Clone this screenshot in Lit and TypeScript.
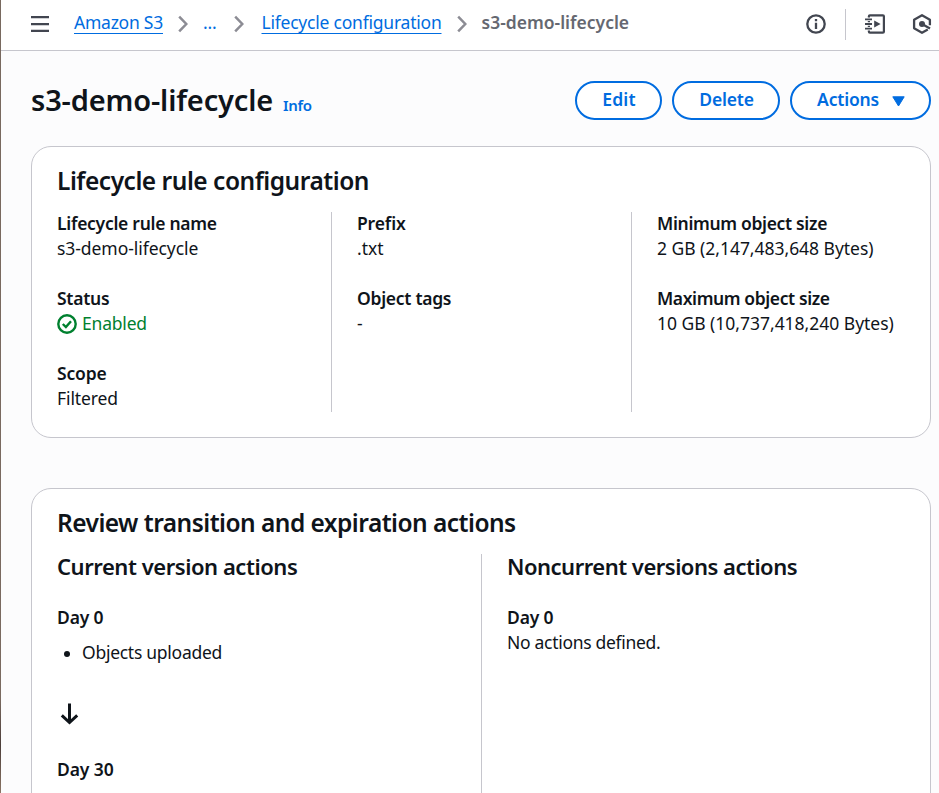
import { LitElement, html, css } from "lit";
import { customElement } from "lit/decorators.js";

const spaced = (text: string, tracking: number, cls = "") =>
  html`<span class=${cls} style="letter-spacing:${tracking}px">${text}</span>`;

interface Field { label: string; labelTrack: number; value: string; track: number; ok?: boolean }

const fields: Field[][] = [
  [
    { label: "Lifecycle rule name", labelTrack: -0.28, value: "s3-demo-lifecycle", track: -0.06 },
    { label: "Status", labelTrack: -0.25, value: "Enabled", track: -0.2, ok: true },
    { label: "Scope", labelTrack: -0.15, value: "Filtered", track: -0.1 },
  ],
  [
    { label: "Prefix", labelTrack: -0.15, value: ".txt", track: 0 },
    { label: "Object tags", labelTrack: -0.28, value: "-", track: 0 },
  ],
  [
    { label: "Minimum object size", labelTrack: -0.33, value: "2 GB (2,147,483,648 Bytes)", track: -0.03 },
    { label: "Maximum object size", labelTrack: -0.4, value: "10 GB (10,737,418,240 Bytes)", track: -0.02 },
  ],
];

@customElement("app-root")
class AppRoot extends LitElement {
  static styles = css`
    :host { display: block; }
    * { box-sizing: border-box; }
    .page {
      display: flex; height: 793px; overflow: hidden; background: #fcfcfd; color: #0f141a;
      font: 400 17.5px/25px "Noto Sans", "Open Sans", sans-serif; white-space: nowrap;
    }
    .edge { width: 1px; flex: none; background: linear-gradient(#78695f 0%, #7a6a60 88%, #4c3e3a 94%, #8b7565 100%); }
    .main { flex: 1; min-width: 0; }
    svg { display: block; flex: none; }
    b, h1, h2, h3 { font-weight: 600; margin: 0; }

    .topbar {
      height: 51px; display: flex; align-items: center; padding: 0 0 2px 30px;
      background: #fff; border-bottom: 1px solid #c6c6cd; color: #424650;
    }
    .crumbs { display: flex; align-items: center; margin-left: 25px; }
    .crumbs span { padding-bottom: 3px; color: #006ce0; }
    .crumbs .link { text-decoration: underline 1px; text-underline-offset: 4px; text-decoration-skip-ink: none; }
    .crumbs .here { color: #656871; font-weight: 600; }
    .chev { margin: 0 15px; }
    .crumbs .dots { width: 16px; }
    .crumbs .dots + .chev { margin-right: 17.5px; }
    .tools { display: flex; align-items: center; margin-left: auto; padding-right: 7px; }
    .sep { width: 1px; height: 31px; background: #c6c6cd; margin: 0 19px 0 19px; }
    .hex { margin-left: 27px; }

    .content { padding: 30px 8px 0 30px; }
    .head { display: flex; align-items: center; height: 39px; }
    .title { display: flex; align-items: baseline; gap: 10px; padding-bottom: 2px; }
    h1 { font-size: 29px; line-height: 36px; }
    .info { font-size: 15px; font-weight: 600; color: #006ce0; }
    .buttons { display: flex; gap: 10px; margin-left: auto; }
    .btn {
      height: 39px; border: 2px solid #006ce0; border-radius: 20px; background: #fff; color: #006ce0;
      font: inherit; font-weight: 600; padding: 0 0 2px; display: flex; align-items: center; justify-content: center;
    }
    .edit { width: 87px; padding-left: 1px; }
    .delete { width: 108px; padding-left: 1px; }
    .actions { width: 141px; gap: 13px; padding-left: 1px; }
    .btn svg { margin-top: 3px; }

    .card { background: #fff; border: 1px solid #c6c6cd; border-radius: 20px; padding: 19px 25px 25px; }
    .first { margin-top: 26px; height: 292px; }
    .second { margin-top: 50px; height: 340px; }
    h2 { font-size: 24.5px; line-height: 30px; margin-bottom: 16px; }
    h3 { font-size: 22px; line-height: 27px; margin: -1px 0 25px; }
    .three { display: grid; grid-template-columns: 274px 300px 1fr; height: 200px; }
    .two { display: grid; grid-template-columns: 424px 1fr; height: 280px; }
    .col + .col { border-left: 1px solid #c6c6cd; padding-left: 25px; }
    .three .col { display: flex; flex-direction: column; gap: 25px; }
    .field { display: flex; flex-direction: column; }
    .field:first-child { margin-top: -1px; }
    .value { display: flex; align-items: center; gap: 5px; height: 25px; }
    .ok { color: #00802f; }
    .bullet { display: flex; align-items: center; margin-top: 10px; padding-left: 7px; gap: 16px; }
    .dot { width: 6px; height: 6px; border-radius: 50%; background: #0f141a; margin-top: 3px; margin-right: -4px; }
    .arrow { margin: 38px 0 32px 3px; }
    .tight { margin-top: 7px; }
    .line { display: block; }
  `;

  private chevron() {
    return html`<svg class="chev" width="10" height="18" viewBox="0 0 10 18" fill="none" stroke="#8c8c94" stroke-width="2.5">
      <path d="M1.2 1.6 8.3 9 1.2 16.4" /></svg>`;
  }

  private field(f: Field) {
    return html`<div class="field">
      <b>${spaced(f.label, f.labelTrack)}</b>
      <div class="value ${f.ok ? "ok" : ""}">
        ${f.ok
          ? html`<svg width="20" height="20" viewBox="0 0 20 20" fill="none" stroke="#00802f" stroke-width="2.4">
              <circle cx="10" cy="10" r="8.7" /><path d="M5.8 10 8.9 13 14 7.2" /></svg>`
          : ""}
        ${spaced(f.value, f.track)}
      </div>
    </div>`;
  }

  private bullet(text: string, tracking: number, cls = "") {
    return html`<div class="bullet ${cls}"><i class="dot"></i>${spaced(text, tracking)}</div>`;
  }

  render() {
    return html`<div class="page">
      <div class="edge"></div>
      <div class="main">
        <div class="topbar">
          <svg width="18" height="16" viewBox="0 0 18 16" fill="#424650"><path d="M0 0h18v2.2H0zM0 7h18v2.2H0zM0 13.8h18V16H0z" /></svg>
          <nav class="crumbs">
            ${spaced("Amazon S3", -0.241, "link")}${this.chevron()}
            ${spaced("...", -0.2, "dots")}${this.chevron()}
            ${spaced("Lifecycle configuration", -0.221, "link")}${this.chevron()}
            ${spaced("s3-demo-lifecycle", 0, "here")}
          </nav>
          <div class="tools">
            <svg width="20" height="20" viewBox="0 0 20 20" fill="none" stroke="#424650" stroke-width="2.3">
              <circle cx="10" cy="10" r="8.7" /><path d="M10 8.8V15M10 5v2.3" /></svg>
            <div class="sep"></div>
            <svg width="20" height="20" viewBox="0 0 20 20" fill="none" stroke="#424650" stroke-width="2.2">
              <path d="M3.9 3.4V2.3q0-1 1-1h13q1 0 1 1v15.4q0 1-1 1H4.9q-1 0-1-1v-1.1M3.9 7v1.3M3.9 11.7V13" />
              <path d="M0 5.3h7M0 10h7M0 14.7h7" stroke-width="1.8" />
              <path d="M9.2 6.6v6.8L15.6 10z" fill="#424650" stroke="none" /></svg>
            <svg class="hex" width="20" height="20" viewBox="0 0 20 20" fill="none" stroke="#424650" stroke-width="2.3">
              <path d="M17.9 11.3V5.7L10 1.2 2.1 5.7v8.6l7.9 4.5 5.8-3.3" stroke-linejoin="round" />
              <path d="M10 10 18 14.6" /><circle cx="10" cy="10" r="3" fill="#424650" stroke="none" /></svg>
          </div>
        </div>
        <div class="content">
          <div class="head">
            <div class="title"><h1>${spaced("s3-demo-lifecycle", -0.15)}</h1>${spaced("Info", -0.3, "info")}</div>
            <div class="buttons">
              <button class="btn edit">${spaced("Edit", 0.15)}</button>
              <button class="btn delete">${spaced("Delete", -0.2)}</button>
              <button class="btn actions">${spaced("Actions", -0.2)}
                <svg width="13" height="11" viewBox="0 0 13 11" fill="#006ce0" stroke="#006ce0" stroke-linejoin="round"><path d="M.8.8h11.4L6.5 10z" /></svg>
              </button>
            </div>
          </div>
          <section class="card first">
            <h2>${spaced("Lifecycle rule configuration", -0.48)}</h2>
            <div class="three">${fields.map((c) => html`<div class="col">${c.map((f) => this.field(f))}</div>`)}</div>
          </section>
          <section class="card second">
            <h2>${spaced("Review transition and expiration actions", -0.53)}</h2>
            <div class="two">
              <div class="col">
                <h3>${spaced("Current version actions", -0.45)}</h3>
                <b class="line">${spaced("Day 0", -0.15)}</b>
                ${this.bullet("Objects uploaded", -0.27)}
                <svg class="arrow" width="19" height="22" viewBox="0 0 19 22" fill="none" stroke="#0f141a" stroke-width="3">
                  <path d="M9.5.5v18.5M1.8 12.3l7.7 7.2 7.7-7.2" /></svg>
                <b class="line">${spaced("Day 30", -0.1)}</b>
                ${this.bullet("Objects move to Standard-IA", 0.1, "tight")}
              </div>
              <div class="col">
                <h3>${spaced("Noncurrent versions actions", -0.5)}</h3>
                <b class="line">${spaced("Day 0", -0.15)}</b>
                <div>${spaced("No actions defined.", -0.3)}</div>
              </div>
            </div>
          </section>
        </div>
      </div>
    </div>`;
  }
}
